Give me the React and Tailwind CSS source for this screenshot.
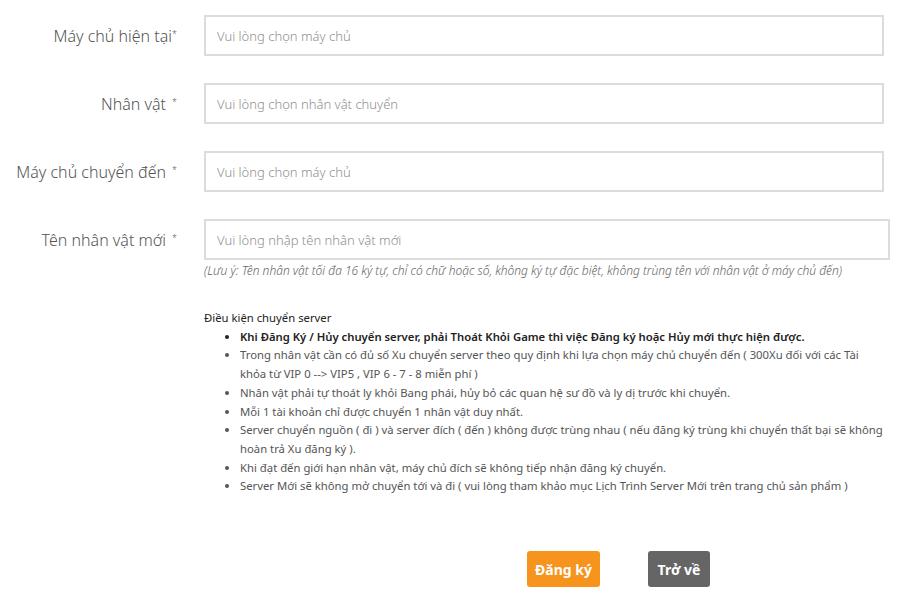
const fields = [
  { label: 'Máy chủ hiện tại', gap: false, placeholder: 'Vui lòng chọn máy chủ', wide: false },
  { label: 'Nhân vật', gap: true, placeholder: 'Vui lòng chọn nhân vật chuyển', wide: false },
  { label: 'Máy chủ chuyển đến', gap: true, placeholder: 'Vui lòng chọn máy chủ', wide: false },
  { label: 'Tên nhân vật mới', gap: true, placeholder: 'Vui lòng nhập tên nhân vật mới', wide: true },
];

const rules = [
  'Trong nhân vật cần có đủ số Xu chuyển server theo quy định khi lựa chọn máy chủ chuyển đến ( 300Xu đối với các Tài khỏa từ VIP 0 --> VIP5 , VIP 6 - 7 - 8 miễn phí )',
  'Nhân vật phải tự thoát ly khỏi Bang phái, hủy bỏ các quan hệ sư đồ và ly dị trước khi chuyển.',
  'Mỗi 1 tài khoản chỉ được chuyển 1 nhân vật duy nhất.',
  'Server chuyển nguồn ( đi ) và server đích ( đến ) không được trùng nhau ( nếu đăng ký trùng khi chuyển thất bại sẽ không hoàn trả Xu đăng ký ).',
  'Khi đạt đến giới hạn nhân vật, máy chủ đích sẽ không tiếp nhận đăng ký chuyển.',
  'Server Mới sẽ không mở chuyển tới và đi ( vui lòng tham khảo mục Lịch Trình Server Mới trên trang chủ sản phẩm )',
];

export default function App() {
  return (
    <div className="w-[900px] h-[603px] bg-white font-['Noto_Sans',sans-serif] text-[#555] overflow-hidden">
      <div className="pt-[15px] flex flex-col gap-[27px]">
        {fields.map((f) => (
          <div key={f.label} className="flex items-center">
            <label className="w-[177px] text-right text-[16px] font-light text-[#555] whitespace-nowrap">
              {f.label}
              <sup className={`text-[9px] ${f.gap ? 'ml-[6px]' : ''}`}>*</sup>
            </label>
            <div className={`ml-[27px] ${f.wide ? 'w-[686px]' : 'w-[680px]'}`}>
              <input
                className="w-full h-[41px] border-2 border-[#dcdcdc] px-[11px] text-[13px] font-light text-[#555] placeholder:text-[#8f8f8f] outline-none"
                placeholder={f.placeholder}
              />
            </div>
          </div>
        ))}
      </div>
      <p className="ml-[204px] mt-[2px] text-[12px] italic font-light text-[#666]">
        (Lưu ý: Tên nhân vật tối đa 16 ký tự, chỉ có chữ hoặc số, không ký tự đặc biệt, không trùng tên với nhân vật ở máy chủ đến)
      </p>
      <div className="ml-[204px] w-[682px] mt-[29px] text-[11.3px] leading-[18.7px] text-[#444]">
        <div className="text-[#222]">Điều kiện chuyển server</div>
        <ul className="list-disc pl-[36px] text-[#555]">
          <li className="font-semibold text-[#222]">
            Khi Đăng Ký / Hủy chuyển server, phải Thoát Khỏi Game thì việc Đăng ký hoặc Hủy mới thực hiện được.
          </li>
          {rules.map((r) => (
            <li key={r}>{r}</li>
          ))}
        </ul>
      </div>
      <div className="mt-[55px] flex ml-[527px] gap-[48px]">
        <button className="h-[36px] w-[73px] rounded-[3px] bg-[#f7941d] text-white text-[14px] font-bold">
          Đăng ký
        </button>
        <button className="h-[36px] w-[62px] rounded-[3px] bg-[#656565] text-white text-[14px] font-bold">
          Trở về
        </button>
      </div>
    </div>
  );
}
